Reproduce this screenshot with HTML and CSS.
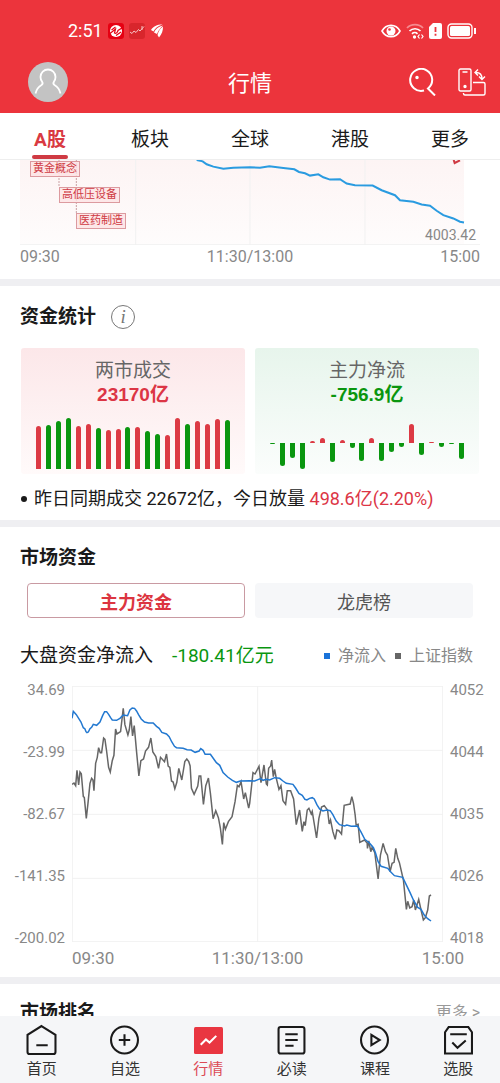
FILE: index.html
```html
<!DOCTYPE html>
<html lang="zh-CN">
<head>
    <meta charset="UTF-8">
    <meta name="viewport" content="width=device-width, initial-scale=1.0">
    <title>行情</title>
    <link rel="stylesheet" href="styles.css">
</head>
<body>
    <header class="header">
        <div class="status-bar">
            <div class="status-left">
                <span class="clock">2:51</span>
                <svg width="16" height="16" viewBox="0 0 16 16"><rect width="16" height="16" rx="3" fill="#e60012"/><circle cx="8" cy="8" r="6" fill="#fff"/><path d="M2 10.500l5.500-4.500-1 4c1.500 1 3-.5 3.500-2.500l4-2.500M3.500 7l4-3M8 12.500l5-3.500" fill="none" stroke="#e60012" stroke-width="1.200"/></svg>
                <svg width="16" height="16" viewBox="0 0 16 16"><rect width="16" height="16" rx="3" fill="#d8262c"/><path d="M1 9l2 1.500 2-2.500 2 1.500 2.500-3L11 8l4-4.500M13 3v4" fill="none" stroke="#f8c4c4" stroke-width="1"/></svg>
                <svg width="14" height="16" viewBox="0 0 14 16" fill="#fff"><path d="M1 7C3 3.500 7 1.500 12.500 1.500 8 3 5 5 3.500 8.500zM4 9.500C5.500 6 8.500 3.500 13 2.500 10.500 5 8.500 7 7 11zM7.500 12C8.500 8 10.500 5 13 3.500c0 4-1 7.500-4 11z"/></svg>
            </div>
            <div class="status-right">
                <svg width="20" height="16" viewBox="0 0 20 16"><path d="M1 8c4-7.500 14-7.500 18 0-4 7.500-14 7.500-18 0z" fill="none" stroke="#fff" stroke-width="1.600"/><circle cx="10" cy="8" r="4.500" fill="#fff"/><circle cx="8.500" cy="6.500" r="1.300" fill="#ec343c"/></svg>
                <svg width="18" height="16" viewBox="0 0 18 16" fill="none" stroke="#fff" stroke-width="1.700"><path d="M1 5c4-4.500 12-4.500 16 0" stroke="#f58a8f"/><path d="M3.500 8c3-3 8-3 11 0M6 10.800c1.500-1.500 4-1.500 5.500 0"/><circle cx="8.500" cy="14" r=".8"/><path d="M13.500 11.500L12 13.500l1.500 2M15.500 11.500l1.500 2-1.500 2" stroke-width="1.200"/></svg>
                <svg width="13" height="16" viewBox="0 0 13 16"><path d="M4 0h7a2 2 0 0 1 2 2v12a2 2 0 0 1-2 2H2a2 2 0 0 1-2-2V4z" fill="#fff"/><path d="M6.500 4v5M6.500 10.800v2" stroke="#ec343c" stroke-width="1.800"/></svg>
                <svg width="30" height="16" viewBox="0 0 30 16"><rect x="1" y="1" width="24" height="14" rx="3.500" fill="none" stroke="#fff" stroke-width="1.400"/><rect x="3" y="3" width="20" height="10" rx="1.500" fill="#fff"/><path d="M28 5v6" stroke="#fff" stroke-width="2"/></svg>
            </div>
        </div>
        <div class="title-bar">
            <button class="avatar" aria-label="我的">
                <svg width="40" height="40" viewBox="0 0 40 40" fill="none" stroke="#fff" stroke-width="1.800"><path d="M7.500 31.500c1-4.500 3.500-7 6-8.500 1.500-1 1.500-2 .5-3.500-1-1.300-1.500-2.500-1.500-4.500 0-4.500 3.500-7.500 7.500-7.500s7.500 3 7.500 7.500c0 2-.5 3.200-1.500 4.500-1 1.500-1 2.500.5 3.500 2.500 1.500 5 4 6 8.500"/></svg>
            </button>
            <h1 class="page-title">行情</h1>
            <div class="title-actions">
                <button class="icon-btn" aria-label="搜索">
                    <svg width="28" height="28" viewBox="0 0 28 28" fill="none" stroke="#fff" stroke-width="2"><path d="M16 22.500A11 11 0 1 1 20 20.500L27 27.500"/><circle cx="9" cy="9.500" r="1" fill="#fff" stroke-width="1.500"/></svg>
                </button>
                <button class="icon-btn" aria-label="切换">
                    <svg width="28" height="28" viewBox="0 0 28 28" fill="none" stroke="#fff" stroke-width="1.400"><rect x="1" y="1" width="12" height="22" rx="1.500"/><path d="M4.500 4h5M15 14.500h10.500a1.500 1.500 0 0 1 1.500 1.500v9.500a1.500 1.500 0 0 1-1.500 1.500H7a1.500 1.500 0 0 1-1.500-1.500V25M18 4.500c4 0 6 2 6 6.500M20 1.500l-3 3 3 3M21 8.500l3 3 3-3"/><circle cx="7" cy="18.500" r="1" fill="#fff"/></svg>
                </button>
            </div>
        </div>
    </header>

    <nav class="tabs">
        <a class="tab active" href="#">A股</a>
        <a class="tab" href="#">板块</a>
        <a class="tab" href="#">全球</a>
        <a class="tab" href="#">港股</a>
        <a class="tab" href="#">更多</a>
    </nav>

    <main class="content">
        <section class="index-section">
            <div class="index-chart">
                <svg class="plot" viewBox="60 30 1380 256" preserveAspectRatio="none">
                    <defs>
                        <linearGradient id="indexFill" x1="0" y1="0" x2="0" y2="1">
                            <stop offset="0" stop-color="#fdf4f4"/>
                            <stop offset="1" stop-color="#fefcfc"/>
                        </linearGradient>
                    </defs>
                    <rect x="60" y="30" width="1332" height="256" fill="url(#indexFill)"/>
                    <path class="grid-line" d="M407 30V286M750 30V286M1095 30V286M60 285H1440"/>
                    <path class="drop-line" d="M177 30V110M229 30V190"/>
                    <polyline class="line-index" points="590,30 608,34 620,43 640,50 670,56 700,53 750,52 780,53 808,49 850,54 883,58 897,66 915,70 930,77 955,73 970,82 990,89 1020,88 1040,101 1065,106 1118,107 1145,121 1185,136 1200,151 1240,156 1265,164 1290,168 1310,183 1330,196 1360,206 1380,216 1392,218"/>
                    <path class="mark" d="M1361 30L1364 39 1380 31"/>
                </svg>
                <span class="tag tag-gold">黄金概念</span>
                <span class="tag tag-power">高低压设备</span>
                <span class="tag tag-pharma">医药制造</span>
                <span class="index-low">4003.42</span>
            </div>
            <div class="index-times">
                <span>09:30</span><span>11:30/13:00</span><span>15:00</span>
            </div>
        </section>

        <section class="section">
            <div class="section-head">
                <h2 class="section-title">资金统计</h2>
                <button class="info-btn" aria-label="说明">i</button>
            </div>
            <div class="cards">
                <div class="card card-red">
                    <div class="card-label">两市成交</div>
                    <div class="card-value red">23170亿</div>
                    <div class="bars volume">
                        <i class="bar up" style="height:43px"></i>
                        <i class="bar down" style="height:44px"></i>
                        <i class="bar down" style="height:48px"></i>
                        <i class="bar down" style="height:51px"></i>
                        <i class="bar up" style="height:43px"></i>
                        <i class="bar up" style="height:45px"></i>
                        <i class="bar down" style="height:41px"></i>
                        <i class="bar up" style="height:39px"></i>
                        <i class="bar up" style="height:40px"></i>
                        <i class="bar down" style="height:42px"></i>
                        <i class="bar up" style="height:42px"></i>
                        <i class="bar down" style="height:38px"></i>
                        <i class="bar down" style="height:35px"></i>
                        <i class="bar up" style="height:34px"></i>
                        <i class="bar up" style="height:51px"></i>
                        <i class="bar down" style="height:45px"></i>
                        <i class="bar up" style="height:48px"></i>
                        <i class="bar up" style="height:45px"></i>
                        <i class="bar up" style="height:50px"></i>
                        <i class="bar down" style="height:49px"></i>
                    </div>
                </div>
                <div class="card card-green">
                    <div class="card-label">主力净流</div>
                    <div class="card-value green">-756.9亿</div>
                    <div class="bars flow">
                        <i class="bar down" style="height:1px"></i>
                        <i class="bar down" style="height:23px"></i>
                        <i class="bar down" style="height:15px"></i>
                        <i class="bar down" style="height:26px"></i>
                        <i class="bar up" style="height:2px"></i>
                        <i class="bar up" style="height:5px"></i>
                        <i class="bar down" style="height:19px"></i>
                        <i class="bar up" style="height:3px"></i>
                        <i class="bar down" style="height:5px"></i>
                        <i class="bar down" style="height:18px"></i>
                        <i class="bar up" style="height:5px"></i>
                        <i class="bar down" style="height:18px"></i>
                        <i class="bar down" style="height:9px"></i>
                        <i class="bar down" style="height:4px"></i>
                        <i class="bar up" style="height:19px"></i>
                        <i class="bar down" style="height:12px"></i>
                        <i class="bar up" style="height:1px"></i>
                        <i class="bar down" style="height:4px"></i>
                        <i class="bar down" style="height:1px"></i>
                        <i class="bar down" style="height:16px"></i>
                    </div>
                </div>
            </div>
            <p class="compare">昨日同期成交 22672亿，今日放量 <span class="red">498.6亿(2.20%)</span></p>
        </section>

        <section class="section">
            <h2 class="section-title">市场资金</h2>
            <div class="switch">
                <button class="switch-btn selected">主力资金</button>
                <button class="switch-btn">龙虎榜</button>
            </div>
            <div class="net-row">
                <span class="net-label">大盘资金净流入</span>
                <span class="net-value green">-180.41亿元</span>
                <span class="legend legend-blue">净流入</span>
                <span class="legend legend-grey">上证指数</span>
            </div>
            <div class="flow-chart">
                <div class="axis axis-left">
                    <span>34.69</span><span>-23.99</span><span>-82.67</span><span>-141.35</span><span>-200.02</span>
                </div>
                <svg class="plot" viewBox="216 18 1115 768" preserveAspectRatio="none">
                    <path class="grid-line" d="M216 19H1331M216 211H1331M216 403H1331M216 595H1331M216 785H1331M217 18V786M774 18V786M1330 18V786"/>
                    <polyline class="line-sh" points="216,313 222,309 227,317 231,271 236,315 240,276 244,281 250,350 253,352 259,415 264,370 270,310 275,295 279,300 282,332 287,250 292,232 296,203 301,218 305,218 311,174 315,178 320,213 326,262 331,276 337,242 342,226 347,147 351,162 362,155 370,85 375,134 384,165 388,150 393,110 398,168 403,137 410,215 417,288 423,242 431,237 437,213 446,202 453,174 459,216 468,230 476,265 482,232 494,245 500,222 505,258 510,262 515,303 520,306 525,326 531,307 537,265 546,300 555,245 561,237 567,245 571,258 575,325 583,343 594,318 598,288 603,288 611,373 618,317 626,294 632,340 640,416 648,392 656,413 662,445 668,493 672,428 677,448 686,425 697,410 706,365 713,316 718,320 724,305 732,357 737,338 747,384 750,370 760,278 766,282 778,259 784,308 793,255 800,312 803,315 807,265 813,258 816,240 821,290 825,268 830,295 838,328 844,317 850,362 858,373 863,332 873,332 882,357 890,434 900,390 908,454 913,425 917,437 923,390 928,385 935,402 938,394 951,474 958,415 966,381 974,377 984,390 989,432 993,420 1000,455 1007,478 1012,450 1018,452 1026,462 1034,376 1052,372 1057,350 1062,370 1067,405 1070,435 1076,433 1081,487 1095,480 1103,489 1104,505 1108,483 1114,515 1118,502 1126,518 1136,597 1143,525 1151,490 1158,515 1164,525 1172,575 1178,550 1184,547 1189,505 1195,535 1200,548 1212,600 1221,688 1225,664 1231,684 1238,680 1243,660 1248,690 1258,658 1265,690 1272,720 1278,713 1285,690 1290,648 1295,645"/>
                    <polyline class="line-net" points="216,115 220,94 229,104 236,115 243,126 250,143 255,147 258,155 261,158 265,156 270,146 275,142 280,133 290,136 300,126 308,107 314,95 320,95 326,103 332,113 337,120 350,121 360,115 370,105 383,107 390,90 397,84 404,85 410,93 416,104 424,117 434,126 446,129 460,129 470,139 478,145 486,157 500,162 508,170 516,186 524,199 530,203 550,205 562,209 574,210 586,217 598,213 603,206 610,211 616,223 632,223 642,237 650,248 660,256 670,278 684,291 698,301 710,307 722,303 750,302 765,303 775,299 783,296 790,301 800,298 810,300 825,293 840,295 850,303 860,310 880,313 888,324 898,340 908,346 916,358 922,360 930,355 938,353 944,357 952,374 960,387 970,393 982,390 992,392 1000,404 1010,423 1020,434 1035,438 1042,435 1055,439 1074,438 1084,455 1096,478 1110,489 1122,503 1128,518 1136,545 1145,559 1165,565 1172,574 1185,587 1210,592 1220,613 1232,638 1242,660 1255,682 1265,688 1275,706 1285,716 1295,723"/>
                </svg>
                <div class="axis axis-right">
                    <span>4052</span><span>4044</span><span>4035</span><span>4026</span><span>4018</span>
                </div>
                <div class="flow-times">
                    <span>09:30</span><span>11:30/13:00</span><span class="time-end">15:00</span>
                </div>
            </div>
        </section>

        <section class="section rank-section">
            <div class="section-head rank-head">
                <h2 class="section-title">市场排名</h2>
                <a class="more-link" href="#">更多 &gt;</a>
            </div>
        </section>
    </main>

    <nav class="tabbar">
        <a class="tabbar-item" href="#">
            <svg class="tabbar-icon" viewBox="0 0 28 28"><path d="M14 1L27.500 9.500V26a2 2 0 0 1-2 2h-23a2 2 0 0 1-2-2V9.500zM9 19.500h11"/></svg>
            <span>首页</span>
        </a>
        <a class="tabbar-item" href="#">
            <svg class="tabbar-icon" viewBox="0 0 28 28"><circle cx="14" cy="14.500" r="13"/><path d="M8.500 14.500h11M14 9v11"/></svg>
            <span>自选</span>
        </a>
        <a class="tabbar-item active" href="#">
            <svg class="tabbar-icon" viewBox="0 0 28 28"><rect class="icon-fill" x="0" y="2" width="28" height="26" rx="1.500"/><path class="icon-light" d="M6.500 19l5-5 3.500 3 6.500-6.500"/></svg>
            <span>行情</span>
        </a>
        <a class="tabbar-item" href="#">
            <svg class="tabbar-icon" viewBox="0 0 28 28"><rect x="1.500" y="2" width="25" height="25.500" rx="2"/><path d="M8 9h12M8 14.500h12M8 20h8"/></svg>
            <span>必读</span>
        </a>
        <a class="tabbar-item" href="#">
            <svg class="tabbar-icon" viewBox="0 0 28 28"><circle cx="14" cy="14.500" r="13"/><path d="M11 9.500v10l8-5z"/></svg>
            <span>课程</span>
        </a>
        <a class="tabbar-item" href="#">
            <svg class="tabbar-icon" viewBox="0 0 28 28"><path d="M4.500 2h19L27 7v20.500H1V7zM6 9h16M8 17l5 5 8-7"/></svg>
            <span>选股</span>
        </a>
    </nav>
</body>
</html>
```
FILE: styles.css
```css
* {
    box-sizing: border-box;
}
body {
    margin: 0;
    height: 100vh;
    display: flex;
    flex-direction: column;
    background: #fff;
    color: #1a1a1a;
    font-family: Roboto, "Noto Sans CJK SC", sans-serif;
    font-size: 16px;
    line-height: 20px;
}
h1, h2, p {
    margin: 0;
}
a {
    color: inherit;
    text-decoration: none;
}
button {
    padding: 0;
    border: none;
    background: none;
    font-family: inherit;
    cursor: pointer;
}
svg {
    display: block;
}
.red {
    color: #dc3545;
}
.green {
    color: #0a960f;
}

/* header */
.header {
    flex: none;
    padding: 20px 14px 11px 28px;
    background: #ec343c;
    color: #fff;
}
.status-bar {
    display: flex;
    justify-content: space-between;
    height: 22px;
    margin-bottom: 20px;
    padding: 0 9px 0 40px;
}
.status-left, .status-right {
    display: flex;
    align-items: center;
    gap: 5px;
}
.clock {
    font-size: 18px;
}
.title-bar {
    display: grid;
    grid-template-columns: 1fr auto 1fr;
    align-items: center;
    margin-left: -14px;
    padding-left: 14px;
}
.avatar {
    width: 40px;
    height: 40px;
    border-radius: 50%;
    background: #c3c3c3;
}
.page-title {
    margin-left: -14px;
    padding-top: 3px;
    font-size: 22px;
    font-weight: 400;
    line-height: 32px;
}
.title-actions {
    display: flex;
    justify-content: flex-end;
    gap: 22px;
}

/* top tabs */
.tabs {
    flex: none;
    display: flex;
    border-bottom: 1px solid #eee;
}
.tab {
    flex: 1;
    display: flex;
    flex-direction: column;
    align-items: center;
    height: 46px;
    padding-top: 14px;
    font-size: 19px;
    line-height: 26px;
}
.tab.active {
    color: #d93a42;
    font-weight: 700;
}
.tab.active::after {
    content: "";
    width: 36px;
    height: 4px;
    margin-top: 2px;
    border-radius: 2px;
    background: #cf3a43;
}

.content {
    flex: 1;
    min-height: 0;
    overflow: hidden;
}
.plot {
    width: 100%;
    height: 100%;
}
.plot path, .plot polyline {
    vector-effect: non-scaling-stroke;
}
.grid-line {
    fill: none;
    stroke: #f1f1f1;
    stroke-width: 1;
}

/* index chart */
.index-section {
    padding: 0 20px 12px;
    color: #888;
}
.index-chart {
    position: relative;
    height: 85px;
}
.line-index {
    fill: none;
    stroke: #2a9be0;
    stroke-width: 2;
}
.drop-line {
    stroke: #c9a0a3;
    stroke-dasharray: 2 1;
}
.mark {
    fill: none;
    stroke: #cf3a43;
    stroke-width: 2;
}
.tag {
    position: absolute;
    padding: 0 2px;
    border: 1px solid #dc9a9f;
    background: rgba(252, 226, 228, 0.8);
    color: #cf3a43;
    font-size: 11px;
    line-height: 14px;
}
.tag-gold {
    left: 10px;
    top: 1px;
}
.tag-power {
    left: 39px;
    top: 27px;
}
.tag-pharma {
    left: 56px;
    top: 53px;
}
.index-low {
    position: absolute;
    right: 4px;
    bottom: 0;
    font-size: 14px;
}
.index-times {
    display: flex;
    justify-content: space-between;
    padding-top: 2px;
}

/* sections */
.section {
    padding: 19px 20px 9px;
    border-top: 7px solid #efeff2;
}
.section-head {
    display: flex;
    align-items: center;
    gap: 15px;
}
.section-title {
    font-size: 19px;
    font-weight: 700;
    line-height: 24px;
}
.info-btn {
    width: 24px;
    height: 24px;
    border: 1px solid #777;
    border-radius: 50%;
    color: #777;
    font-family: "Liberation Serif", serif;
    font-size: 19px;
    font-style: italic;
    line-height: 20px;
}
.cards {
    display: grid;
    grid-template-columns: 1fr 1fr;
    gap: 10px;
    margin: 19px 1px 0;
}
.card {
    padding: 11px 15px 5px;
    border-radius: 3px;
    text-align: center;
    line-height: 24px;
}
.card-red {
    background: linear-gradient(#fce7e9, #fffafa);
}
.card-green {
    background: linear-gradient(#e7f5ec, #fbfdfc);
}
.card-label {
    color: #666;
    font-size: 19px;
}
.card-value {
    font-family: "Liberation Sans", "Noto Sans CJK SC", sans-serif;
    font-size: 19px;
    font-weight: 700;
}
.bars {
    display: flex;
    justify-content: space-between;
    align-items: flex-end;
    height: 51px;
    margin-top: 11px;
}
.bar {
    width: 5px;
}
.bar.up {
    background: #dc3a44;
}
.bar.down {
    background: #0a960f;
}
.volume .bar, .flow .up {
    border-radius: 3px 3px 0 0;
}
.flow .up {
    margin-bottom: 26px;
}
.flow .down {
    align-self: flex-start;
    margin-top: 25px;
    border-radius: 0 0 3px 3px;
}
.compare {
    display: flex;
    align-items: center;
    margin-top: 13px;
    font-size: 18px;
    line-height: 24px;
    white-space: pre;
}
.compare::before {
    content: "";
    width: 6px;
    height: 6px;
    margin: 0 7px 0 1px;
    border-radius: 50%;
    background: #1a1a1a;
}

/* market funds */
.switch {
    display: grid;
    grid-template-columns: 1fr 1fr;
    gap: 10px;
    margin: 13px 7px 0;
}
.switch-btn {
    height: 35px;
    border-radius: 4px;
    background: #f6f7f9;
    color: #555;
    font-size: 18px;
}
.switch-btn.selected {
    border: 1px solid #c99aa2;
    background: #fff;
    color: #dc3540;
    font-weight: 700;
}
.net-row {
    display: flex;
    align-items: center;
    margin: 26px 7px 18px 0;
    font-size: 19px;
    line-height: 24px;
}
.net-value {
    margin: 0 auto 0 19px;
}
.legend {
    display: flex;
    align-items: center;
    gap: 8px;
    margin-left: 9px;
    color: #888;
    font-size: 16px;
}
.legend::before {
    content: "";
    width: 6px;
    height: 6px;
    background: #666;
}
.legend-blue::before {
    background: #1a73d9;
}
.flow-chart {
    display: grid;
    grid-template-columns: 52px 1fr 37px;
    grid-template-rows: 256px auto;
    margin: 0 -7px;
    column-gap: 7px;
    color: #888;
}
.axis {
    display: flex;
    flex-direction: column;
    justify-content: space-between;
    margin: -4px 0;
    font-size: 15px;
    line-height: 16px;
}
.axis-left {
    align-items: flex-end;
}
.line-net {
    fill: none;
    stroke: #2278d0;
    stroke-width: 1.5;
}
.line-sh {
    fill: none;
    stroke: #666;
    stroke-width: 1.5;
}
.flow-times {
    grid-column: 2;
    display: grid;
    grid-template-columns: 1fr auto 1fr;
    padding-top: 6px;
    font-size: 17px;
}
.time-end {
    justify-self: end;
    margin-right: -21px;
}
.rank-section {
    padding-top: 17px;
}
.rank-head {
    justify-content: space-between;
}
.more-link {
    color: #999;
    font-size: 16px;
}

/* bottom bar */
.tabbar {
    flex: none;
    display: flex;
    padding: 9px 0 4px;
    background: #f5f6f8;
}
.tabbar-item {
    flex: 1;
    display: flex;
    flex-direction: column;
    align-items: center;
    gap: 5px;
    color: #333;
    font-size: 15px;
}
.tabbar-item.active {
    color: #dc4a55;
}
.tabbar-icon {
    width: 29px;
    height: 29px;
    fill: none;
    stroke: #1a1a1a;
    stroke-width: 2;
    overflow: visible;
}
.icon-fill {
    fill: #e93641;
    stroke: none;
}
.icon-light {
    stroke: #fff;
}
```
